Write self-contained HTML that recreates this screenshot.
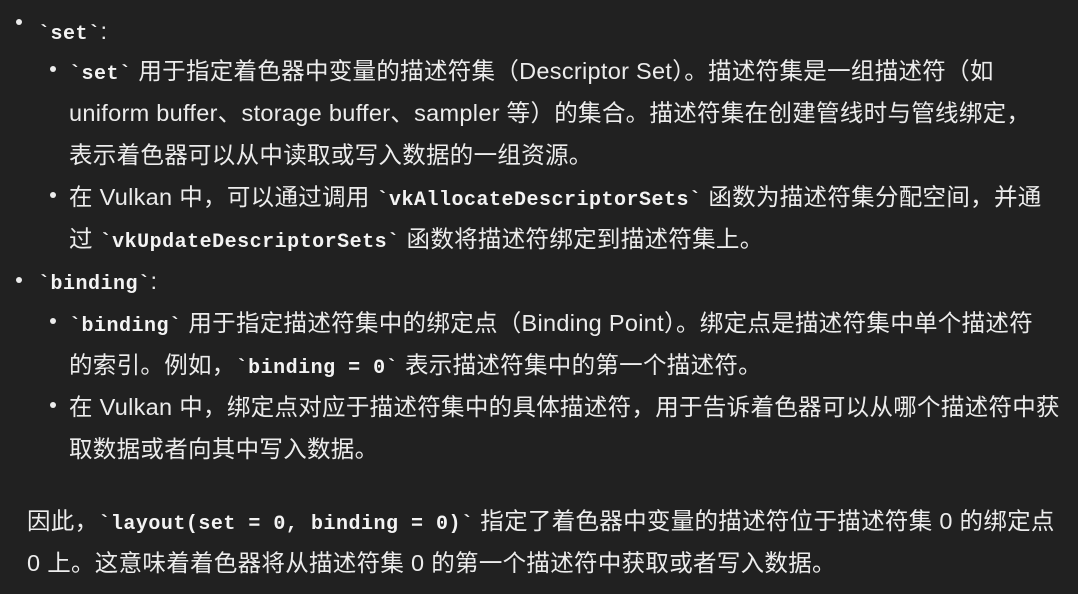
<!DOCTYPE html>
<html><head><meta charset="utf-8"><style>
body{margin:0;width:1078px;height:594px;background:#212121;overflow:hidden;font-family:"Liberation Sans","Noto Sans CJK SC",sans-serif;color:#ececec;font-size:23.5px;letter-spacing:0.3px}
.l{position:absolute;white-space:nowrap;line-height:42px;height:42px}
code{font-family:"Liberation Mono","DejaVu Sans Mono",monospace;font-weight:bold;font-size:20px;letter-spacing:0.5px;color:#f3f3f3}
.b{position:absolute;width:6px;height:6px;border-radius:50%;background:#ececec}
</style></head><body>
<div class="b" style="left:16px;top:19px"></div>
<div class="l" style="left:38px;top:10px"><code>`set`</code>:</div>
<div class="b" style="left:50px;top:66px"></div>
<div class="l" style="left:69px;top:50px"><code>`set`</code> 用于指定着色器中变量的描述符集（Descriptor Set）。描述符集是一组描述符（如</div>
<div class="l" style="left:69px;top:92px">uniform buffer、storage buffer、sampler 等）的集合。描述符集在创建管线时与管线绑定，</div>
<div class="l" style="left:69px;top:134px">表示着色器可以从中读取或写入数据的一组资源。</div>
<div class="b" style="left:50px;top:192px"></div>
<div class="l" style="left:69px;top:176px">在 Vulkan 中，可以通过调用 <code>`vkAllocateDescriptorSets`</code> 函数为描述符集分配空间，并通</div>
<div class="l" style="left:69px;top:218px">过 <code>`vkUpdateDescriptorSets`</code> 函数将描述符绑定到描述符集上。</div>
<div class="b" style="left:16px;top:277px"></div>
<div class="l" style="left:38px;top:260px"><code>`binding`</code>:</div>
<div class="b" style="left:50px;top:318px"></div>
<div class="l" style="left:69px;top:302px"><code>`binding`</code> 用于指定描述符集中的绑定点（Binding Point）。绑定点是描述符集中单个描述符</div>
<div class="l" style="left:69px;top:344px">的索引。例如，<code>`binding = 0`</code> 表示描述符集中的第一个描述符。</div>
<div class="b" style="left:50px;top:402px"></div>
<div class="l" style="left:69px;top:386px">在 Vulkan 中，绑定点对应于描述符集中的具体描述符，用于告诉着色器可以从哪个描述符中获</div>
<div class="l" style="left:69px;top:428px">取数据或者向其中写入数据。</div>
<div class="l" style="left:27px;top:500px">因此，<code>`layout(set = 0, binding = 0)`</code> 指定了着色器中变量的描述符位于描述符集 0 的绑定点</div>
<div class="l" style="left:27px;top:542px">0 上。这意味着着色器将从描述符集 0 的第一个描述符中获取或者写入数据。</div>
</body></html>
